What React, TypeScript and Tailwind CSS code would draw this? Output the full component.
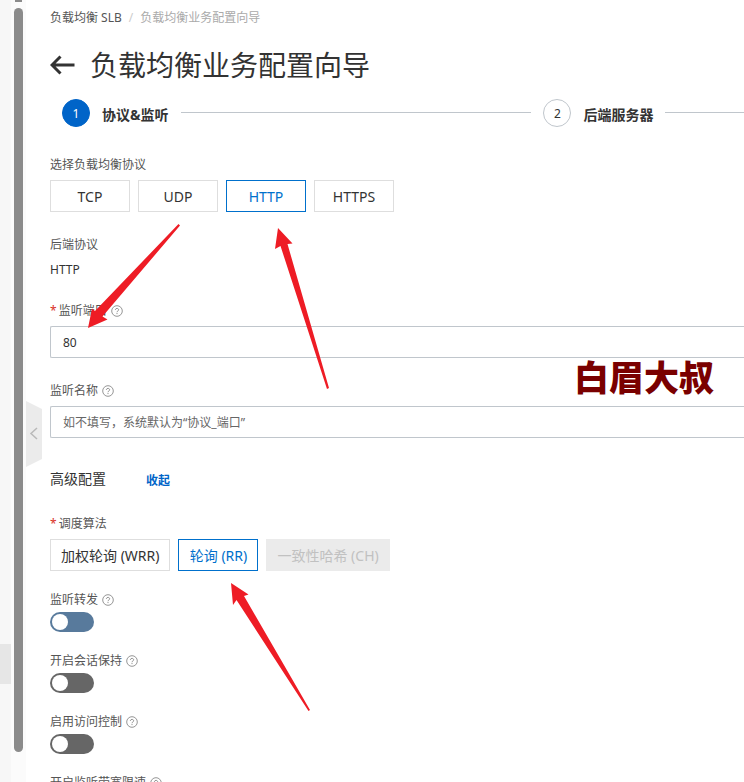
import React, { useState } from "react";

function HelpIcon() {
  return (
    <svg className="ml-1 h-3 w-3 shrink-0" viewBox="0 0 12 12" fill="none" stroke="#8a8a8a" aria-hidden="true">
      <circle cx="6" cy="6" r="5.3" strokeWidth="0.9" />
      <path d="M4.4 4.9C4.4 2.9 7.6 2.9 7.6 4.8C7.6 6 6 6 6 7.2" strokeWidth="1" />
      <path d="M6 8.1V9.1" strokeWidth="1" />
    </svg>
  );
}

type LabelProps = { text: string; htmlFor?: string; required?: boolean; help?: boolean };

function FieldLabel({ text, htmlFor, required, help }: LabelProps) {
  return (
    <div className="flex items-center text-xs leading-5 text-[#555555]">
      {required && <span className="mr-0.5 text-[#d93026]">*</span>}
      {htmlFor ? <label htmlFor={htmlFor}>{text}</label> : <span>{text}</span>}
      {help && <HelpIcon />}
    </div>
  );
}

type OptionProps = { text: string; selected?: boolean; disabled?: boolean; onClick?: () => void };

function OptionButton({ text, selected, disabled, onClick }: OptionProps) {
  const tone = disabled
    ? "border-[#ebebeb] bg-[#ebebeb] text-[#c1c1c1]"
    : selected
      ? "border-[#0070cc] bg-white text-[#0070cc]"
      : "border-[#dedede] bg-white text-[#333333]";
  return (
    <button
      type="button"
      disabled={disabled}
      aria-pressed={selected}
      onClick={onClick}
      className={`h-8 min-w-20 border px-2.5 pt-0.5 text-sm leading-5 whitespace-nowrap ${tone}`}
    >
      {text}
    </button>
  );
}

function SwitchField({ id, text, tone }: { id: string; text: string; tone: string }) {
  return (
    <div className="mt-[19px]">
      <FieldLabel text={text} htmlFor={id} help />
      <span className="mt-0.5 flex">
        <input
          id={id}
          type="checkbox"
          role="switch"
          className={`h-5 w-11 appearance-none rounded-full p-0.5 before:block before:h-4 before:w-4 before:rounded-full before:bg-white checked:before:ml-6 ${tone}`}
        />
      </span>
    </div>
  );
}

function Step({ index, text, active }: { index: number; text: string; active?: boolean }) {
  return (
    <li className="flex items-center">
      <span
        className={`flex h-7 w-7 shrink-0 items-center justify-center rounded-full border pt-0.5 text-xs ${
          active ? "border-[#0064c8] bg-[#0064c8] text-white" : "border-[#c0c6cc] bg-white text-[#333333]"
        }`}
      >
        {index}
      </span>
      <span className="mx-3 pt-1 text-sm leading-5 font-bold whitespace-nowrap text-[#333333]">{text}</span>
      <span className={`mb-0.5 h-px flex-1 bg-[#c0c6cc] ${active ? "mr-3" : ""}`} />
    </li>
  );
}

const protocols = ["TCP", "UDP", "HTTP", "HTTPS"];
const algorithms = ["加权轮询 (WRR)", "轮询 (RR)"];

export default function App() {
  const [protocol, setProtocol] = useState("HTTP");
  const [algorithm, setAlgorithm] = useState("轮询 (RR)");

  return (
    <div className="relative flex h-screen overflow-hidden bg-white font-['Noto_Sans','Noto_Sans_CJK_SC',sans-serif] text-[#333333]">
      <aside className="flex w-[11px] shrink-0 flex-col justify-end bg-[#f7f7f7] pb-[98px]">
        <div className="h-10 bg-[#e6e6e6]" />
      </aside>
      <div className="flex w-[15px] shrink-0 flex-col bg-[#fbfbfb] pb-[30px] pl-[3px]">
        <div className="mb-1.5 ml-px h-0.5 w-[7px] bg-[#8b8b8b]" />
        <div className="w-[9px] flex-1 rounded-full bg-[#8b8b8b]" />
      </div>
      <div className="flex w-4 shrink-0 flex-col pt-[401px]">
        <button type="button" aria-label="收起菜单" className="h-[66px] w-4">
          <svg className="h-[66px] w-4" viewBox="0 0 16 66" fill="none">
            <path d="M0 0L16 8V58L0 66Z" fill="#ebebeb" />
            <path d="M11 27L5 32.500L11 38" stroke="#b8b8b8" strokeWidth="1.5" />
          </svg>
        </button>
      </div>

      <main className="min-w-0 flex-1 pt-[9px] pl-2">
        <nav className="flex text-xs leading-[18px]">
          <a href="#slb" className="text-[#555555]">负载均衡 SLB</a>
          <span className="mx-[7px] text-[#cccccc]">/</span>
          <span className="text-[#aaaaaa]">负载均衡业务配置向导</span>
        </nav>

        <div className="mt-[19px] flex items-center">
          <button type="button" aria-label="返回" className="mr-3.5">
            <svg className="h-[26px] w-[26px]" viewBox="0 0 26 26" fill="none" stroke="#333333" strokeWidth="3">
              <path d="M2 13H24.500M10.500 4.500L2 13L10.500 21.500" />
            </svg>
          </button>
          <h1 className="text-[28px] leading-[38px] font-normal whitespace-nowrap">负载均衡业务配置向导</h1>
        </div>

        <ol className="mt-[15px] ml-3 grid grid-cols-[12fr_5fr]">
          <Step index={1} text="协议&监听" active />
          <Step index={2} text="后端服务器" />
        </ol>

        <section className="mt-7">
          <FieldLabel text="选择负载均衡协议" />
          <div className="mt-[5px] flex gap-2">
            {protocols.map((p) => (
              <OptionButton key={p} text={p} selected={p === protocol} onClick={() => setProtocol(p)} />
            ))}
          </div>
        </section>

        <section className="mt-[23px]">
          <FieldLabel text="后端协议" />
          <p className="mt-1.5 text-xs leading-[18px]">HTTP</p>
        </section>

        <section className="mt-[22px]">
          <FieldLabel text="监听端口" htmlFor="port" required help />
          <input
            id="port"
            defaultValue="80"
            className="mt-[5px] block h-8 w-full rounded-l-xs border border-r-0 border-[#c0c6cc] px-3 text-xs text-[#333333]"
          />
        </section>

        <section className="mt-[23px]">
          <FieldLabel text="监听名称" htmlFor="name" help />
          <input
            id="name"
            placeholder="如不填写，系统默认为“协议_端口”"
            className="mt-[5px] block h-8 w-full rounded-l-xs border border-r-0 border-[#c0c6cc] px-3 text-xs placeholder:text-[#666666]"
          />
        </section>

        <div className="mt-[31px] flex items-center">
          <h2 className="text-sm leading-5 font-normal">高级配置</h2>
          <button type="button" className="ml-10 pt-1 text-xs leading-4 font-bold text-[#0064c8]">收起</button>
        </div>

        <section className="mt-[25px]">
          <FieldLabel text="调度算法" required />
          <div className="mt-[5px] flex gap-2">
            {algorithms.map((a) => (
              <OptionButton key={a} text={a} selected={a === algorithm} onClick={() => setAlgorithm(a)} />
            ))}
            <OptionButton text="一致性哈希 (CH)" disabled />
          </div>
        </section>

        <SwitchField id="forward" text="监听转发" tone="bg-[#587a9c]" />
        <SwitchField id="session" text="开启会话保持" tone="bg-[#666666]" />
        <SwitchField id="access" text="启用访问控制" tone="bg-[#666666]" />
        <SwitchField id="bandwidth" text="开启监听带宽限速" tone="bg-[#666666]" />
      </main>

      <div className="pointer-events-none absolute top-[357px] right-[30px] text-[35px] leading-[42px] font-black text-[#7a0000]">
        白眉大叔
      </div>

      <svg className="pointer-events-none absolute top-0 left-0 h-[782px] w-[744px]" viewBox="0 0 744 782" fill="#ee1c25" aria-hidden="true">
        <path d="M88 328L92 308.500L95 311L178.500 224L180 225.500L102.500 316.500L107.500 319.500Z" />
        <path d="M278 228L292.500 243.500L287.500 244L329 388L327 389L280.500 246L275 249Z" />
        <path d="M231 583L248.500 594.500L244 596L310 710L308.500 711L236.500 600L233 605Z" />
      </svg>
    </div>
  );
}
